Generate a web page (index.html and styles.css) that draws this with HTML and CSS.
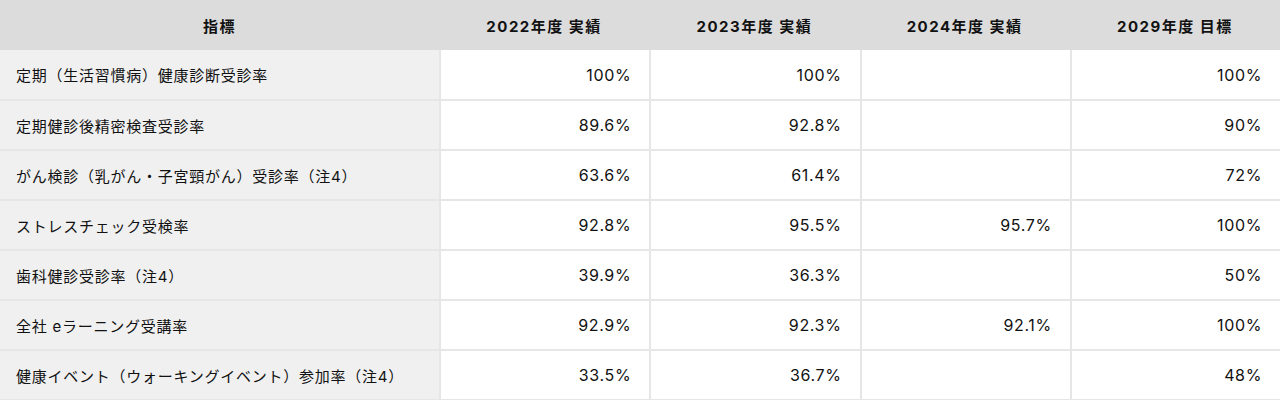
FILE: index.html
```html
<!DOCTYPE html>
<html lang="ja">
<head>
<meta charset="utf-8">
<title>指標</title>
<link rel="stylesheet" href="styles.css">
</head>
<body>
<table class="kpi">
  <colgroup>
    <col class="c-label">
    <col class="c-val">
    <col class="c-val">
    <col class="c-val">
    <col class="c-val">
  </colgroup>
  <thead>
    <tr>
      <th>指標</th>
      <th>2022年度 実績</th>
      <th>2023年度 実績</th>
      <th>2024年度 実績</th>
      <th>2029年度 目標</th>
    </tr>
  </thead>
  <tbody>
    <tr><td class="label">定期（生活習慣病）健康診断受診率</td><td>100%</td><td>100%</td><td></td><td>100%</td></tr>
    <tr><td class="label">定期健診後精密検査受診率</td><td>89.6%</td><td>92.8%</td><td></td><td>90%</td></tr>
    <tr><td class="label">がん検診（乳がん・子宮頸がん）受診率（注4）</td><td>63.6%</td><td>61.4%</td><td></td><td>72%</td></tr>
    <tr><td class="label">ストレスチェック受検率</td><td>92.8%</td><td>95.5%</td><td>95.7%</td><td>100%</td></tr>
    <tr><td class="label">歯科健診受診率（注4）</td><td>39.9%</td><td>36.3%</td><td></td><td>50%</td></tr>
    <tr><td class="label">全社 eラーニング受講率</td><td>92.9%</td><td>92.3%</td><td>92.1%</td><td>100%</td></tr>
    <tr><td class="label">健康イベント（ウォーキングイベント）参加率（注4）</td><td>33.5%</td><td>36.7%</td><td></td><td>48%</td></tr>
  </tbody>
</table>
</body>
</html>
```
FILE: styles.css
```css
html, body {
  margin: 0;
  padding: 0;
  background: #ffffff;
}
body {
  font-family: "Inter", "Noto Sans CJK JP", sans-serif;
  color: #111111;
  font-size: 15px;
}
.kpi {
  width: 1280px;
  table-layout: fixed;
  border-collapse: separate;
  border-spacing: 0;
}
.c-label { width: 439px; }
.kpi th {
  background: #dcdcdc;
  height: 50px;
  padding: 0;
  font-weight: bold;
  font-size: 15px;
  letter-spacing: 0.1em;
  text-align: center;
  vertical-align: middle;
}
.kpi td {
  height: 48px;
  padding: 0 18px 0 16px;
  border-bottom: 2px solid #e6e6e6;
  border-left: 2px solid #e6e6e6;
  text-align: right;
  vertical-align: middle;
  white-space: nowrap;
  font-size: 16px;
  letter-spacing: 0.04em;
}
.kpi td.label {
  background: #f0f0f0;
  text-align: left;
  border-left: none;
  font-size: 15px;
  letter-spacing: 0.05em;
}
.kpi tbody tr:first-child td {
  height: 49px;
}
```
